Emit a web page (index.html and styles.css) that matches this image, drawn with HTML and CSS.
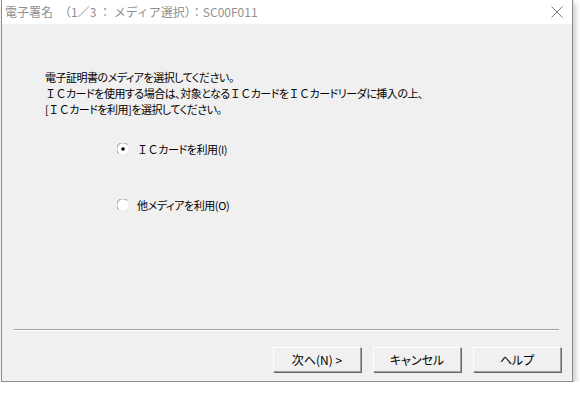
FILE: index.html
```html
<!DOCTYPE html>
<html>
<head>
  <meta charset="utf-8">
  <title>電子署名</title>
  <link rel="stylesheet" href="styles.css">
</head>
<body>
  <div class="window">
    <div class="titlebar">
      <span class="title">電子署名　（1／3 ： メディア選択）：SC00F011</span>
      <svg class="close" width="12" height="12" viewBox="0 0 12 12">
        <path d="M0.5 0.5 L11.5 11.5 M11.5 0.5 L0.5 11.5" stroke="#7a7a7a" stroke-width="1" fill="none"/>
      </svg>
    </div>

    <div class="content">
      <p class="message">
        電子証明書のメディアを選択してください。<br>
        <span class="wide">ＩＣ</span>カードを使用する場合は、対象となる<span class="wide">ＩＣ</span>カードを<span class="wide">ＩＣ</span>カードリーダに挿入の上、<br>
        [<span class="wide">ＩＣ</span>カードを利用]を選択してください。
      </p>

      <div class="options">
        <label class="option">
          <svg class="radio" width="12" height="12" viewBox="0 0 12 12">
            <circle cx="6" cy="6" r="5.5" fill="#fff"/>
            <path d="M1.5 10.5 A5.5 5.5 0 0 1 10.5 1.5" stroke="#8a8a8a" fill="none"/>
            <path d="M10.5 1.5 A5.5 5.5 0 0 1 1.5 10.5" stroke="#e6e6e6" fill="none"/>
            <circle cx="6" cy="6" r="1.8" fill="#000"/>
          </svg>
          <span><span class="wide">ＩＣ</span>カードを利用(I)</span>
        </label>
        <label class="option">
          <svg class="radio" width="12" height="12" viewBox="0 0 12 12">
            <circle cx="6" cy="6" r="5.5" fill="#fff"/>
            <path d="M1.5 10.5 A5.5 5.5 0 0 1 10.5 1.5" stroke="#8a8a8a" fill="none"/>
            <path d="M10.5 1.5 A5.5 5.5 0 0 1 1.5 10.5" stroke="#e6e6e6" fill="none"/>
          </svg>
          <span>他メディアを利用(O)</span>
        </label>
      </div>

      <div class="footer">
        <div class="separator"></div>
        <div class="buttons">
          <button class="btn">次へ(N) &gt;</button>
          <button class="btn">キャンセル</button>
          <button class="btn">ヘルプ</button>
        </div>
      </div>
    </div>
  </div>
</body>
</html>
```

FILE: styles.css
```css
* {
    margin: 0;
    padding: 0;
    box-sizing: border-box;
}

body {
    background: #fff;
    font-family: "Noto Sans CJK JP", "Noto Sans", sans-serif;
    font-size: 12px;
    color: #000;
}

.window {
    width: 572px;
    height: 382px;
    margin-left: 1px;
    border: 1px solid #8c8c8c;
    border-top: 0;
    display: flex;
    flex-direction: column;
    box-shadow: 2px 3px 6px rgba(0, 0, 0, 0.25);
}

.titlebar {
    height: 24px;
    background: #fff;
    display: flex;
    align-items: center;
    justify-content: space-between;
    padding: 0 9px 1px 3px;
}

.title {
    color: #8f8f8f;
    font-size: 12px;
}

.content {
    flex: 1;
    background: #f0f0f0;
    display: flex;
    flex-direction: column;
}

.message {
    padding: 45px 0 0 43px;
    font-size: 11px;
    line-height: 16px;
    letter-spacing: -0.5px;
    font-feature-settings: "palt";
}

.wide {
    font-feature-settings: normal;
}

.options {
    display: flex;
    flex-direction: column;
    gap: 40px;
    margin: 24px 0 0 115px;
}

.option {
    display: flex;
    align-items: center;
    gap: 8px;
    height: 16px;
    font-size: 11px;
    letter-spacing: -0.4px;
    font-feature-settings: "palt";
}

.footer {
    margin-top: auto;
}

.separator {
    margin: 0 13px 0 12px;
    border-top: 1px solid #a0a0a0;
    border-bottom: 1px solid #fff;
}

.buttons {
    display: flex;
    justify-content: flex-end;
    gap: 12px;
    padding: 16px 11px 9px 0;
}

.btn {
    width: 88px;
    height: 25px;
    background: #f0f0f0;
    border: 1px solid;
    border-color: #fff #a0a0a0 #a0a0a0 #fff;
    box-shadow: 1px 1px 0 #696969;
    font-family: "Noto Sans CJK JP", sans-serif;
    font-size: 12px;
    font-feature-settings: "palt";
    color: #000;
}
```
